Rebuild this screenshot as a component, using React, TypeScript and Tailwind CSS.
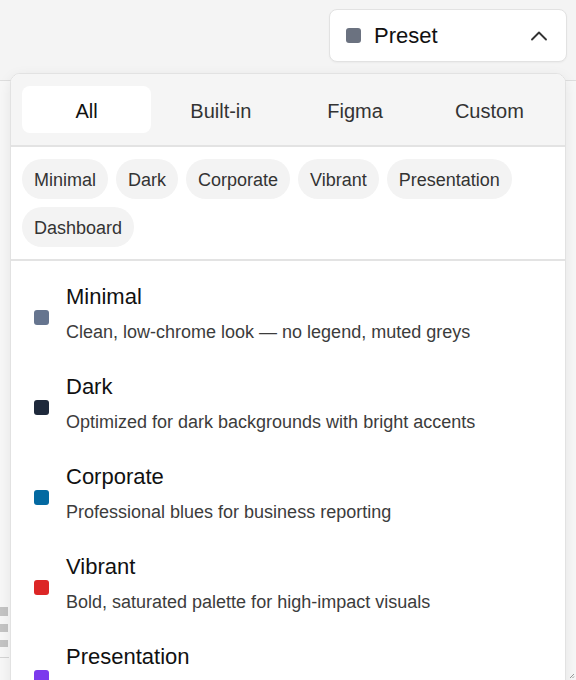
import { ChevronUp } from "lucide-react";

type Preset = {
  name: string;
  description: string;
  color: string;
};

const tabs = ["All", "Built-in", "Figma", "Custom"];

const tags = ["Minimal", "Dark", "Corporate", "Vibrant", "Presentation", "Dashboard"];

const presets: Preset[] = [
  { name: "Minimal", description: "Clean, low-chrome look — no legend, muted greys", color: "bg-[#66758f]" },
  { name: "Dark", description: "Optimized for dark backgrounds with bright accents", color: "bg-[#1e293b]" },
  { name: "Corporate", description: "Professional blues for business reporting", color: "bg-[#0369a1]" },
  { name: "Vibrant", description: "Bold, saturated palette for high-impact visuals", color: "bg-[#dc2626]" },
  { name: "Presentation", description: "Large type and high contrast for slides", color: "bg-[#7c3aed]" },
];

export default function App() {
  return (
    <div className="relative h-[680px] w-full overflow-hidden bg-[#f7f7f7] font-['Liberation_Sans',Arial,sans-serif]">
      {/* top bar */}
      <div className="flex h-[81px] justify-end border-b border-[#dedede] bg-[#f4f4f4] pr-[9px] pt-[9px]">
        <button className="flex h-[53px] w-[238px] items-center rounded-[8px] border border-[#e2e2e2] bg-white pl-[16px] pr-[13px] shadow-[0_1px_2px_rgba(0,0,0,0.04)]">
          <span className="h-[15px] w-[15px] rounded-[3px] bg-[#6b7280]" />
          <span className="ml-[13px] text-[22px] text-[#111]">Preset</span>
          <ChevronUp size={28} strokeWidth={1.6} className="ml-auto text-[#333]" />
        </button>
      </div>

      {/* things behind the popover */}
      <div className="absolute left-0 top-[607px] flex flex-col gap-[8px]">
        <div className="h-[9px] w-[8px] bg-[#c4c4c4]" />
        <div className="h-[8px] w-[8px] bg-[#c4c4c4]" />
        <div className="h-[7px] w-[8px] bg-[#c4c4c4]" />
        <div className="mt-[2px] h-px w-[9px] bg-[#d4d4d4]" />
      </div>
      <svg className="absolute bottom-[1px] right-[1px]" width="6" height="6" viewBox="0 0 6 6">
        <path d="M5 1 1 5M5 3.5 3.5 5" stroke="#999" strokeWidth="1" />
      </svg>

      {/* popover */}
      <div className="absolute left-[10px] top-[73px] w-[556px] overflow-hidden rounded-t-[10px] border border-[#e2e2e2] bg-white shadow-[0_4px_14px_rgba(0,0,0,0.08)]">
        <div className="grid grid-cols-4 gap-[5px] border-b-2 border-[#e3e3e3] bg-[#f5f5f5] px-[11px] pb-[12px] pt-[12px]">
          {tabs.map((tab, i) => (
            <div
              key={tab}
              className={`flex h-[47px] items-center justify-center rounded-[8px] pt-[2px] text-[20px] ${
                i === 0 ? "bg-white text-[#111]" : "text-[#333]"
              }`}
            >
              {tab}
            </div>
          ))}
        </div>

        <div className="flex flex-wrap gap-[8px] border-b-2 border-[#e3e3e3] px-[11px] py-[12px]">
          {tags.map((tag) => (
            <span
              key={tag}
              className="flex h-[40px] items-center rounded-full bg-[#f3f3f3] px-[12px] pt-[3px] text-[18px] text-[#333]"
            >
              {tag}
            </span>
          ))}
        </div>

        <div className="pt-[7px]">
          {presets.map((p) => (
            <div key={p.name} className="flex h-[90px] px-[23px] pt-[15px]">
              <span className={`mt-[27px] h-[15px] w-[15px] shrink-0 rounded-[3px] ${p.color}`} />
              <div className="ml-[17px] flex flex-col">
                <span className="text-[22px] leading-[28px] text-[#111]">{p.name}</span>
                <span className="mt-[9px] text-[18px] leading-[24px] text-[#3c3c3c]">{p.description}</span>
              </div>
            </div>
          ))}
        </div>
      </div>
    </div>
  );
}
